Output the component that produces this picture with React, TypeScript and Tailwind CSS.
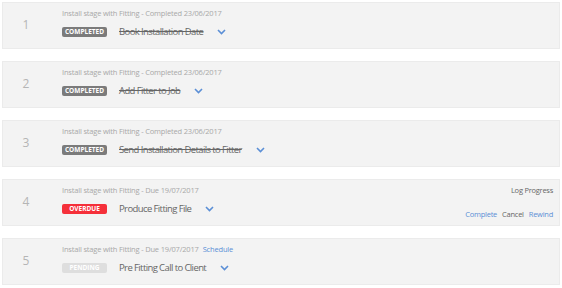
import React from "react"

type Status = "completed" | "overdue" | "pending"

interface Stage {
  n: number
  meta: string
  title: string
  status: Status
  schedule?: boolean
  actions?: boolean
}

const stages: Stage[] = [
  { n: 1, meta: "Install stage with Fitting - Completed 23/06/2017", title: "Book Installation Date", status: "completed" },
  { n: 2, meta: "Install stage with Fitting - Completed 23/06/2017", title: "Add Fitter to Job", status: "completed" },
  { n: 3, meta: "Install stage with Fitting - Completed 23/06/2017", title: "Send Installation Details to Fitter", status: "completed" },
  { n: 4, meta: "Install stage with Fitting - Due 19/07/2017", title: "Produce Fitting File", status: "overdue", actions: true },
  { n: 5, meta: "Install stage with Fitting - Due 19/07/2017", title: "Pre Fitting Call to Client", status: "pending", schedule: true },
]

function Badge({ status }: { status: Status }) {
  const styles = {
    completed: "bg-[#7b7b7b] text-white",
    overdue: "bg-[#f5303a] text-white",
    pending: "bg-[#dedede] text-white",
  }
  return (
    <span
      className={`w-[45px] h-[10px] rounded-[2px] flex items-center justify-center text-[6.5px] font-bold uppercase ${styles[status]}`}
    >
      {status}
    </span>
  )
}

function Chevron() {
  return (
    <svg width="9" height="6" viewBox="0 0 9 6" className="shrink-0">
      <path d="M1 1l3.5 3.5L8 1" fill="none" stroke="#5b8fd6" strokeWidth="1.6" />
    </svg>
  )
}

function StageCard({ stage }: { stage: Stage }) {
  const done = stage.status === "completed"
  return (
    <div className="h-[47px] bg-[#f3f3f3] border border-[#ebebeb] flex">
      <div className="w-[46px] shrink-0 flex items-center justify-center text-[12px] text-[#b5b5b5] pb-[1px]">
        {stage.n}
      </div>
      <div className="flex-1 flex flex-col gap-[5px] ml-[13px] pt-[5px]">
        <div className="h-[12px] flex items-center text-[7.5px] tracking-[-0.18px] text-[#a8a8a8] gap-[4px]">
          <span>{stage.meta}</span>
          {stage.schedule && <span className="text-[#5b8fd6]">Schedule</span>}
        </div>
        <div className="h-[14px] flex items-center">
          <Badge status={stage.status} />
          <span
            className={`ml-[12px] text-[9.5px] tracking-[-0.6px] text-[#666] ${done ? "line-through" : ""}`}
          >
            {stage.title}
          </span>
          <span className="ml-[14px] flex">
            <Chevron />
          </span>
        </div>
      </div>
      {stage.actions && (
        <div className="flex flex-col items-end pt-[5px] pr-[6px] gap-[12px] text-[7.5px] tracking-[-0.25px]">
          <span className="h-[12px] flex items-center text-[#666]">Log Progress</span>
          <div className="h-[12px] flex items-center gap-[5px]">
            <span className="text-[#5b8fd6]">Complete</span>
            <span className="text-[#666]">Cancel</span>
            <span className="text-[#5b8fd6]">Rewind</span>
          </div>
        </div>
      )}
    </div>
  )
}

export default function App() {
  return (
    <div
      className="w-[562px] h-[288px] bg-white px-[2px] pt-[2px] flex flex-col gap-[12px]"
      style={{ fontFamily: '"Open Sans", sans-serif' }}
    >
      {stages.map((s) => (
        <StageCard key={s.n} stage={s} />
      ))}
    </div>
  )
}
